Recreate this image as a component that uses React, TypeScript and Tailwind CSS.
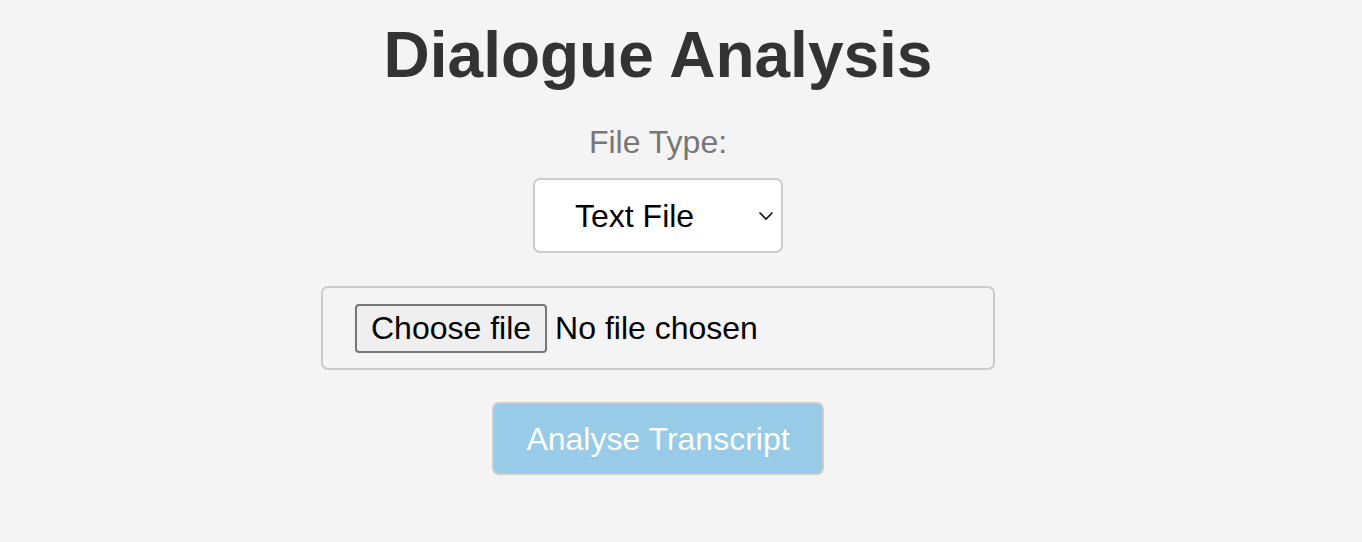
import React from 'react';

export default function App() {
  return (
    <div className="min-h-[542px] w-full bg-[#f4f4f4] font-['Liberation_Sans',Arial,sans-serif]">
      <div className="flex w-[1316px] flex-col items-center pt-[18px]">
        <h1 className="text-[64px] font-bold leading-[74px] text-[#333333]">Dialogue Analysis</h1>

        <label className="mt-[32px] text-[32px] leading-[36px] text-[#777777]">File Type:</label>

        <div className="mt-[18px] flex h-[75px] w-[250px] items-center rounded-[7px] border-2 border-[#cccccc] bg-white pl-[40px] pr-[7px]">
          <span className="flex-1 text-[32px] leading-[36px] text-black">Text File</span>
          <svg width="16" height="10" viewBox="0 0 16 10" fill="none">
            <path d="M1.5 1.5 L8 8 L14.5 1.5" stroke="#111" strokeWidth="1.6" />
          </svg>
        </div>

        <div className="mt-[33px] flex h-[84px] w-[674px] items-center rounded-[7px] border-2 border-[#cccccc] pl-[32px]">
          <div className="flex h-[49px] items-center rounded-[4px] border-2 border-[#767676] bg-[#efefef] px-[14px] pb-[1px] text-[32px] leading-[36px] text-black">
            Choose file
          </div>
          <span className="ml-[8px] pb-[1px] text-[32px] leading-[36px] text-black">No file chosen</span>
        </div>

        <button className="mt-[32px] flex h-[73px] w-[332px] items-center justify-center rounded-[7px] border-2 border-[#cccccc] bg-[#97cbe8] text-[32px] leading-[36px] text-white">
          Analyse Transcript
        </button>
      </div>
    </div>
  );
}
